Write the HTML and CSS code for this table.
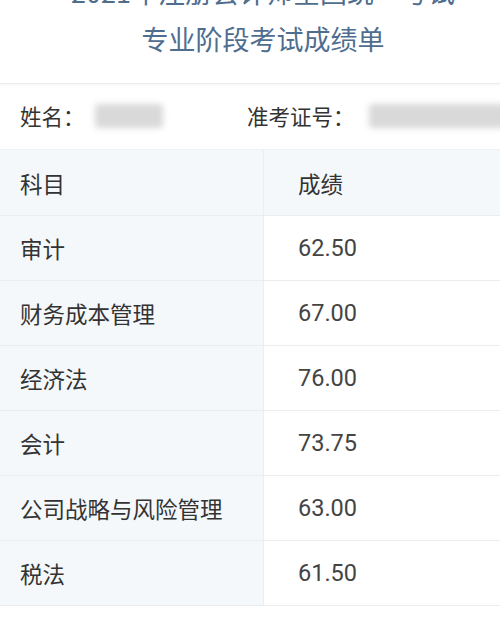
FILE: index.html
```html
<!DOCTYPE html>
<html lang="zh-CN">
<head>
<meta charset="utf-8">
<link rel="stylesheet" href="styles.css">
</head>
<body>
<div class="page">
  <header class="title">
    <div class="title-line">2021年注册会计师全国统一考试</div>
    <div class="title-line">专业阶段考试成绩单</div>
  </header>
  <div class="info">
    <div class="info-item name-item">
      <span class="label">姓名：</span>
      <span class="masked masked-name"></span>
    </div>
    <div class="info-item id-item">
      <span class="label">准考证号：</span>
      <span class="masked masked-id"></span>
    </div>
  </div>
  <div class="table">
    <div class="cell head subject">科目</div>
    <div class="cell head score">成绩</div>
    <div class="cell subject">审计</div>
    <div class="cell score">62.50</div>
    <div class="cell subject">财务成本管理</div>
    <div class="cell score">67.00</div>
    <div class="cell subject">经济法</div>
    <div class="cell score">76.00</div>
    <div class="cell subject">会计</div>
    <div class="cell score">73.75</div>
    <div class="cell subject">公司战略与风险管理</div>
    <div class="cell score">63.00</div>
    <div class="cell subject">税法</div>
    <div class="cell score">61.50</div>
  </div>
</div>
</body>
</html>
```

FILE: styles.css
```css
* { box-sizing: border-box; }
html, body { margin: 0; padding: 0; background: #ffffff; }
body {
  font-family: "Noto Sans CJK SC", "Noto Sans", sans-serif;
  color: #333333;
  overflow: hidden;
}
.page { width: 500px; }

.title {
  margin-top: -32px;
  padding: 0 0 21px 26px;
  text-align: center;
  color: #4f6d8f;
  font-size: 27px;
  border-bottom: 1px solid #ececec;
  box-shadow: 0 1px 2px rgba(0,0,0,0.04);
}
.title-line {
  line-height: 47px;
  white-space: nowrap;
}

.info {
  display: flex;
  align-items: center;
  height: 65px;
  padding-left: 20px;
  padding-bottom: 2px;
  font-size: 21.5px;
  color: #333;
}
.info-item { display: flex; align-items: center; flex-shrink: 0; }
.name-item { width: 227px; }
.label { white-space: nowrap; }
.masked {
  display: inline-block;
  height: 24px;
  background: #d9d9d9;
  filter: blur(3px);
  border-radius: 3px;
}
.masked-name { width: 68px; margin-left: 10px; }
.masked-id { width: 140px; margin-left: 14px; }

.table {
  display: grid;
  grid-template-columns: 264px 1fr;
  font-size: 22.5px;
  border-top: 1px solid #eef1f3;
}
.cell {
  height: 65px;
  display: flex;
  align-items: center;
  border-bottom: 1px solid #e9edf0;
  white-space: nowrap;
}
.cell.head { height: 66px; }
.subject {
  padding-left: 20px;
  background: #f5f8fa;
  border-right: 1px solid #eaeef1;
}
.score {
  padding-left: 34px;
  background: #ffffff;
  color: #444;
  font-family: Roboto, "Noto Sans CJK SC", sans-serif;
  font-size: 23.5px;
}
.score.head {
  background: #f5f8fa;
  color: #333;
  font-family: "Noto Sans CJK SC", sans-serif;
  font-size: 22.5px;
}
```
